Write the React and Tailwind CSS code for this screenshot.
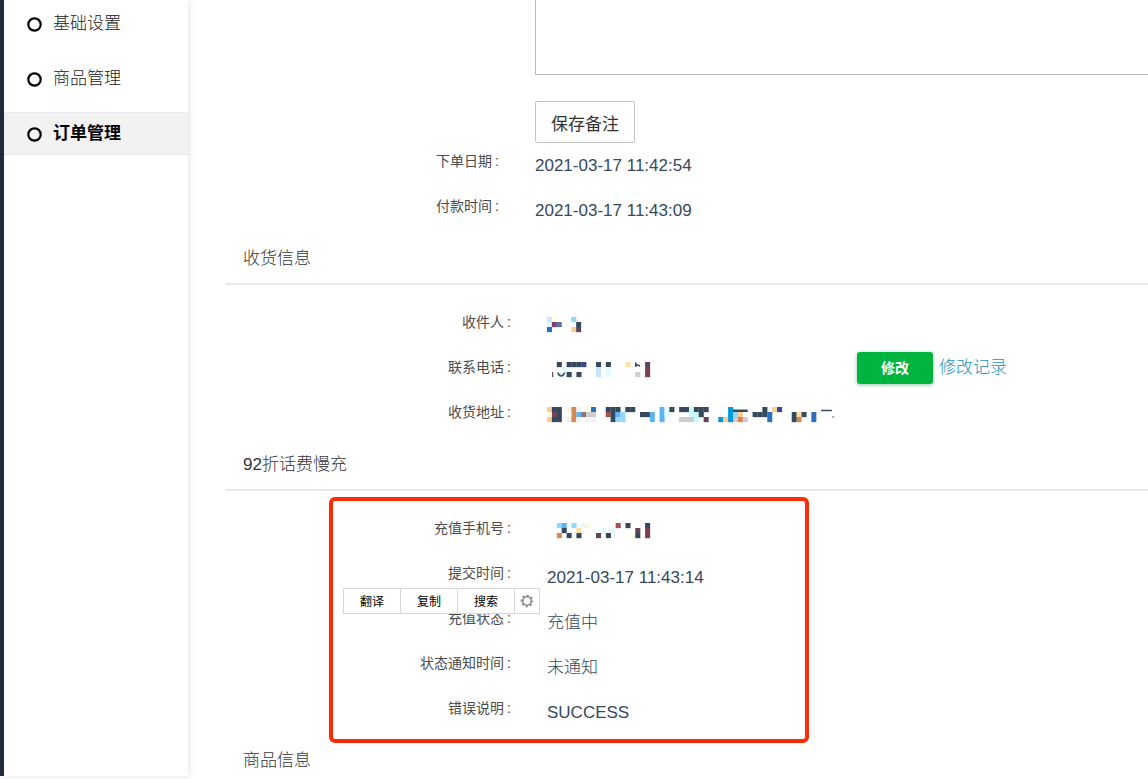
const menu = [
  { label: '基础设置' },
  { label: '商品管理' },
  { label: '订单管理', active: true },
]

const palette = {
  d: '#34495e',
  D: '#3b4890',
  b: '#2c6fc0',
  B: '#0097dd',
  s: '#5cb4f5',
  S: '#90d8ff',
  c: '#c8ffff',
  C: '#e2fbff',
  l: '#c8e2ff',
  y: '#ffe0a4',
  Y: '#fffde0',
  o: '#ffcc90',
  O: '#d98850',
  r: '#a0504d',
  m: '#7a4055',
  p: '#5f4459',
  v: '#7a3f7d',
  g: '#d0cad2',
  G: '#f0f2f5',
  n: '#8f7370',
  t: '#5a7499',
}

// one letter per block, "." leaves it empty
const masks = {
  name: [
    'lY...S.',
    'Cvt...d',
    'b....op',
  ],
  phone: [
    '..d.dddD..d.d...y...p',
    '...C......l.C.......m',
    '....d.d...l.C.....g.m',
  ],
  address: [
    'odd.GOG.Yb..ddd.dd.....sCd.ddcddd....B......d.oD.........',
    'Ymd..Osngg..rdsS...dds.sC....ccd.....BSo..dddb....dyd.b..',
    'odd.GOG.GG...dSS.....s.s...gggc.p..BoBgOg....b....dO..b..',
  ],
  recharge: [
    '..Ss.S.CY.....r.d...d',
    '...d..y....C.C....p.m',
    '..O.d.d...p.d....Yd.m',
  ],
}

function Mosaic({ rows, className, children }) {
  return (
    <svg
      viewBox={`0 0 ${rows[0].length} 3`}
      preserveAspectRatio="none"
      className={`mb-1 h-[15px] overflow-visible ${className}`}
      aria-hidden="true">
      {rows.map((row, y) =>
        [...row].map((key, x) =>
          key === '.' ? null : <rect key={`${x}-${y}`} x={x} y={y} width="1.03" height="1.03" fill={palette[key]} />
        )
      )}
      {children}
    </svg>
  )
}

function Row({ label, narrow, children }) {
  return (
    <div className="flex h-[45px]">
      <dt className={`${narrow ? 'w-[274px]' : 'w-[286px]'} shrink-0 pt-2 text-right text-sm leading-5 text-[#4c4c4c]`}>
        {label}
        <span className="ml-[3px]">:</span>
      </dt>
      <dd className="ml-9 flex min-w-0 flex-1 items-center text-[17px] leading-6 font-light text-[#34495e]">{children}</dd>
    </div>
  )
}

function Heading({ children }) {
  return (
    <h2 className="flex h-[52px] items-center border-b-2 border-[#e8e8e8] pt-[2px] pl-[18px] text-[17px] leading-6 font-light text-[#333]">
      {children}
    </h2>
  )
}

function Sidebar() {
  return (
    <aside className="z-10 w-[188px] shrink-0 border-l-4 border-[#1e2b3b] bg-white shadow-[1px_0_6px_rgba(0,0,0,0.12)]">
      <nav className="flex flex-col gap-3 pt-[2px]">
        {menu.map((item) => (
          <a
            key={item.label}
            href="#"
            className={`flex h-[43px] items-center gap-[11px] border-y pt-px pl-[23px] text-[17px] leading-6 ${
              item.active ? 'border-[#e8e9ee] bg-[#f2f2f2] font-bold text-black' : 'border-transparent font-light text-[#222]'
            }`}>
            <svg viewBox="0 0 15 15" className="size-[15px]">
              <circle cx="7.5" cy="7.5" r="6.2" fill="none" stroke="#000" strokeWidth="2.2" />
            </svg>
            {item.label}
          </a>
        ))}
      </nav>
    </aside>
  )
}

function SelectionMenu() {
  return (
    <div className="absolute top-[97px] left-[118px] flex h-[26px] divide-x divide-[#d8d8d8] border border-[#d8d8d8] bg-white text-xs text-black">
      <button type="button" className="w-[57px] pt-[2px]">翻译</button>
      <button type="button" className="w-[57px] pt-[2px]">复制</button>
      <button type="button" className="w-[57px] pt-[2px]">搜索</button>
      <button type="button" aria-label="设置" className="flex w-6 items-center justify-center">
        <svg viewBox="0 0 14 14" className="size-[14px]" fill="none" stroke="#8a8a8a">
          <circle cx="7" cy="7" r="4.2" strokeWidth="1.6" />
          <circle cx="7" cy="7" r="5.6" strokeWidth="1.5" strokeDasharray="2.2 2.2" strokeDashoffset="1.1" />
        </svg>
      </button>
    </div>
  )
}

export default function App() {
  return (
    <div className="flex h-screen overflow-hidden bg-white pb-[3px] font-['Liberation_Sans','Noto_Sans_CJK_SC',sans-serif]">
      <Sidebar />
      <main className="min-w-0 flex-1 overflow-hidden pl-[37px]">
        <div className="flex flex-col items-start pl-[310px]">
          <textarea
            aria-label="备注"
            className="mb-[26px] block h-[75px] w-full resize-none border-b border-l border-[#bbb] outline-none"
          />
          <button type="button" className="h-[42px] w-[100px] rounded-[2px] border border-[#c4c4c4] bg-white pt-[5px] text-[17px] leading-6 text-[#333]">
            保存备注
          </button>
        </div>
        <dl>
          <Row label="下单日期" narrow>2021-03-17 11:42:54</Row>
          <Row label="付款时间" narrow>2021-03-17 11:43:09</Row>
        </dl>

        <Heading>收货信息</Heading>
        <dl className="pt-[19px]">
          <Row label="收件人">
            <Mosaic rows={masks.name} className="w-[34px]" />
          </Row>
          <Row label="联系电话">
            <div className="w-[310px] shrink-0">
              <Mosaic rows={masks.phone} className="w-[103px]">
                <path d="M2.2 2.1Q2.4 2.8 2.9 2.8T3.6 2.1" fill="none" stroke="#34495e" strokeWidth="0.3" />
                <path d="M1.15 2v1" stroke="#7a4055" strokeWidth="0.25" />
                <path d="M18.1 1V.1M18.1.5l.9.3" fill="none" stroke="#34495e" strokeWidth="0.3" />
              </Mosaic>
            </div>
            <button type="button" className="mr-[6px] mb-2 h-8 w-[76px] shrink-0 rounded-[3px] bg-[#00b440] text-sm font-bold text-white shadow-[0_1px_4px_rgba(0,120,40,0.4)]">
              修改
            </button>
            <a href="#" className="mb-2 shrink-0 text-[#1b93b5]">修改记录</a>
          </Row>
          <Row label="收货地址">
            <Mosaic rows={masks.address} className="w-[279px]">
              <path d="M38 .75h3" stroke="#34495e" strokeWidth="0.5" />
              <path d="M56 .7h2.2" stroke="#34495e" strokeWidth="0.3" />
              <path d="M58.2 2h.5" stroke="#b0b4bc" strokeWidth="0.4" />
            </Mosaic>
          </Row>
        </dl>

        <Heading>92折话费慢充</Heading>
        <dl className="relative pt-[19px]">
          <Row label="充值手机号">
            <Mosaic rows={masks.recharge} className="w-[103px]" />
          </Row>
          <Row label="提交时间">2021-03-17 11:43:14</Row>
          <Row label="充值状态">充值中</Row>
          <Row label="状态通知时间">未通知</Row>
          <Row label="错误说明">SUCCESS</Row>
          <div className="pointer-events-none absolute top-[6px] left-[104px] h-[246px] w-[480px] rounded-md border-4 border-[#ff2a06]" />
          <SelectionMenu />
        </dl>

        <Heading>商品信息</Heading>
      </main>
    </div>
  )
}
